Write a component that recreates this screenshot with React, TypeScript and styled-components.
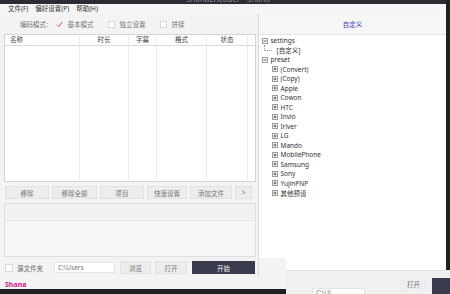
import React from "react";
import styled, { createGlobalStyle } from "styled-components";

const GlobalStyle = createGlobalStyle`
  html, body {
    margin: 0;
    padding: 0;
    background: #1f1f24;
  }
  body {
    font-family: "Noto Sans", "Noto Sans CJK SC", sans-serif;
  }
`;

const columns = [
    { title: "名称", width: 74, left: true },
    { title: "时长", width: 48 },
    { title: "字幕", width: 27 },
    { title: "格式", width: 49 },
    { title: "状态", width: 40 },
    { title: "", width: 12 },
];

const actions = [
    { label: "移除", width: 44 },
    { label: "移除全部", width: 45 },
    { label: "项目", width: 44 },
    { label: "快速设置", width: 40 },
    { label: "添加文件", width: 42 },
    { label: ">", width: 17 },
];

const presets = [
    "(Convert)", "(Copy)", "Apple", "Cowon", "HTC", "Invio", "Iriver", "LG",
    "Mando", "MobilePhone", "Samsung", "Sony", "YujinPNP", "其他预设",
];

function TreeIcon({ open }: { open?: boolean }) {
    return (
        <svg width="6" height="6" viewBox="0 0 6 6">
            <rect x="0.5" y="0.5" width="5" height="5" fill="#fff" stroke="#9c9c9c" />
            <line x1="1.5" y1="3" x2="4.5" y2="3" stroke="#555" />
            {!open && <line x1="3" y1="1.5" x2="3" y2="4.5" stroke="#555" />}
        </svg>
    );
}

function CheckMark() {
    return (
        <svg width="7" height="7" viewBox="0 0 7 7">
            <path d="M1 3.8 L2.8 5.6 L6.2 1" fill="none" stroke="#d2456a" strokeWidth="1" />
        </svg>
    );
}

function App() {
    return (
        <>
            <GlobalStyle />
            <Desktop>
                <Window>
                    <TitleBar>
                        <TitleText>ShanaEncoder - Shana</TitleText>
                    </TitleBar>
                    <MenuBar>
                        <MenuItem>文件(F)</MenuItem>
                        <MenuItem>偏好设置(P)</MenuItem>
                        <MenuItem>帮助(H)</MenuItem>
                    </MenuBar>
                    <Body>
                        <LeftPane>
                            <ModeRow>
                                <ModeLabel>编码模式：</ModeLabel>
                                <Option>
                                    <CheckBox $plain><CheckMark /></CheckBox>
                                    基本模式
                                </Option>
                                <Option>
                                    <CheckBox />
                                    独立设置
                                </Option>
                                <Option>
                                    <CheckBox />
                                    拼接
                                </Option>
                            </ModeRow>
                            <Table>
                                {columns.map((c, i) => (
                                    <Column key={i} $width={c.width} $last={i === columns.length - 1}>
                                        <HeaderCell $left={c.left}>{c.title}</HeaderCell>
                                    </Column>
                                ))}
                            </Table>
                            <ActionRow>
                                {actions.map(a => (
                                    <ActionButton key={a.label} $width={a.width}>{a.label}</ActionButton>
                                ))}
                            </ActionRow>
                            <LogPanel>
                                <LogStrip />
                            </LogPanel>
                            <BottomRow>
                                <CheckBox />
                                <FolderLabel>源文件夹</FolderLabel>
                                <PathInput>C:\Users</PathInput>
                                <ActionButton $width={31}>浏览</ActionButton>
                                <ActionButton $width={32}>打开</ActionButton>
                                <StartButton>开始</StartButton>
                            </BottomRow>
                        </LeftPane>
                        <RightPane>
                            <PaneHeader>
                                <CustomLink>自定义</CustomLink>
                            </PaneHeader>
                            <Tree>
                                <TreeRow $level={0}>
                                    <TreeIcon open />
                                    <span>settings</span>
                                </TreeRow>
                                <TreeRow $level={1}>
                                    <Connector />
                                    <span>[自定义]</span>
                                </TreeRow>
                                <TreeRow $level={0}>
                                    <TreeIcon open />
                                    <span>preset</span>
                                </TreeRow>
                                {presets.map(p => (
                                    <TreeRow key={p} $level={2}>
                                        <TreeIcon />
                                        <span>{p}</span>
                                    </TreeRow>
                                ))}
                            </Tree>
                        </RightPane>
                    </Body>
                    <Footer>Shana</Footer>
                </Window>
                <BackWindow>
                    <BackWhite />
                    <BackBar>
                        <BackInput>C:\Ul</BackInput>
                        <BackButton>打开</BackButton>
                        <BackDark />
                    </BackBar>
                </BackWindow>
            </Desktop>
        </>
    );
}

const Desktop = styled.div`
    position: relative;
    width: 450px;
    height: 294px;
    overflow: hidden;
    background: #1f1f24;
`;

const Window = styled.div`
    width: 446px;
    height: 289px;
    display: flex;
    flex-direction: column;
    background: #f3f3f3;
    color: #555;
    font-size: 6.5px;
`;

const TitleBar = styled.div`
    height: 4px;
    flex: none;
    overflow: hidden;
    background: #2c2c33;
    display: flex;
    justify-content: center;
`;

const TitleText = styled.div`
    margin-top: -6px;
    margin-left: 10px;
    font-size: 8px;
    line-height: 9px;
    color: #8a8a90;
`;

const MenuBar = styled.div`
    height: 10px;
    flex: none;
    display: flex;
    align-items: center;
    gap: 7px;
    padding-left: 8px;
    color: #333;
    background: #f5f5f5;
`;

const MenuItem = styled.span`
    line-height: 10px;
`;

const Body = styled.div`
    flex: 1;
    display: flex;
    min-height: 0;
`;

const LeftPane = styled.div`
    width: 253px;
    padding-left: 4px;
    display: flex;
    flex-direction: column;
`;

const ModeRow = styled.div`
    height: 20px;
    flex: none;
    display: flex;
    align-items: center;
    padding-left: 16px;
    gap: 3px;
    color: #777;
`;

const ModeLabel = styled.span``;

const Option = styled.span`
    display: flex;
    align-items: center;
    gap: 5px;
    margin-right: 11px;
`;

const CheckBox = styled.span<{ $plain?: boolean }>`
    width: 7px;
    height: 7px;
    flex: none;
    display: flex;
    align-items: center;
    justify-content: center;
    box-sizing: border-box;
    border: ${p => (p.$plain ? "none" : "1px solid #d8d8d8")};
    background: ${p => (p.$plain ? "transparent" : "#fff")};
`;

const Table = styled.div`
    height: 148px;
    flex: none;
    width: 252px;
    box-sizing: border-box;
    display: flex;
    background: #fff;
    border: 1px solid #d4d4d4;
`;

const Column = styled.div<{ $width: number; $last?: boolean }>`
    width: ${p => p.$width}px;
    flex: ${p => (p.$last ? 1 : "none")};
    border-right: ${p => (p.$last ? "none" : "1px solid #ececec")};
`;

const HeaderCell = styled.div<{ $left?: boolean }>`
    height: 10px;
    line-height: 10px;
    padding-left: ${p => (p.$left ? "5px" : "0")};
    text-align: ${p => (p.$left ? "left" : "center")};
    color: #444;
    border-bottom: 1px solid #dcdcdc;
`;

const ActionRow = styled.div`
    margin-top: 4px;
    margin-left: 1px;
    height: 13px;
    flex: none;
    display: flex;
    gap: 3px;
`;

const ActionButton = styled.div<{ $width: number }>`
    width: ${p => p.$width}px;
    height: 13px;
    flex: none;
    box-sizing: border-box;
    display: flex;
    align-items: center;
    justify-content: center;
    background: #ececec;
    border: 1px solid #e2e2e2;
    color: #777;
`;

const LogPanel = styled.div`
    margin-top: 4px;
    width: 252px;
    height: 54px;
    flex: none;
    box-sizing: border-box;
    background: #f6f6f6;
    border: 1px solid #e0e0e0;
`;

const LogStrip = styled.div`
    height: 16px;
    border-bottom: 1px solid #e6e6e6;
    background: #f1f1f1;
`;

const BottomRow = styled.div`
    margin-top: 4px;
    margin-left: 1px;
    height: 13px;
    flex: none;
    display: flex;
    align-items: center;
    gap: 4px;

    & > ${CheckBox} {
        width: 8px;
        height: 8px;
    }
`;

const FolderLabel = styled.span`
    margin-right: 7px;
    color: #666;
`;

const PathInput = styled.div`
    width: 61px;
    height: 11px;
    box-sizing: border-box;
    padding-left: 3px;
    line-height: 9px;
    background: #fff;
    border: 1px solid #e6e6e6;
    color: #777;
    margin-right: 1px;
`;

const StartButton = styled.div`
    width: 63px;
    height: 13px;
    margin-left: 1px;
    display: flex;
    align-items: center;
    justify-content: center;
    background: #393a4c;
    color: #f0f0f0;
`;

const RightPane = styled.div`
    flex: 1;
    display: flex;
    flex-direction: column;
    border-left: 1px solid #dadada;
    margin-left: 1px;
`;

const PaneHeader = styled.div`
    height: 20px;
    flex: none;
    display: flex;
    align-items: center;
    justify-content: center;
    background: #f6f6f6;
`;

const CustomLink = styled.span`
    color: #3a44b0;
`;

const Tree = styled.div`
    height: 224px;
    flex: none;
    box-sizing: border-box;
    padding: 1px 0 0 3px;
    background: #fff;
    border-top: 1px solid #e2e2e2;
    color: #333;
`;

const TreeRow = styled.div<{ $level: number }>`
    height: 9.5px;
    display: flex;
    align-items: center;
    gap: 2.5px;
    padding-left: ${p => (p.$level === 2 ? 10 : p.$level === 1 ? 2 : 0)}px;
    white-space: nowrap;
`;

const Connector = styled.span`
    width: 8px;
    height: 6px;
    margin-top: -5px;
    margin-right: 2px;
    box-sizing: border-box;
    border-left: 1px dotted #999;
    border-bottom: 1px dotted #999;
`;

const Footer = styled.div`
    height: 13px;
    flex: none;
    box-sizing: border-box;
    padding: 4px 0 0 5px;
    font-family: "Open Sans", "Noto Sans", sans-serif;
    font-weight: 700;
    font-size: 7px;
    line-height: 9px;
    color: #d3147e;
`;

const BackWindow = styled.div`
    position: absolute;
    left: 286px;
    top: 257px;
    width: 164px;
    height: 37px;
    display: flex;
    flex-direction: column;
    font-size: 6.5px;
    color: #777;
`;

const BackWhite = styled.div`
    height: 13px;
    width: 160px;
    flex: none;
    background: #fff;
`;

const BackBar = styled.div`
    flex: 1;
    min-height: 0;
    overflow: hidden;
    display: flex;
    align-items: flex-start;
    background: #f0f0f0;
    border-top: 1px solid #e4e4e4;
`;

const BackInput = styled.div`
    flex: none;
    margin: 17px 0 0 26px;
    width: 53px;
    height: 10px;
    box-sizing: border-box;
    padding-left: 3px;
    line-height: 8px;
    background: #fff;
    border: 1px solid #e4e4e4;
`;

const BackButton = styled.div`
    flex: none;
    margin: 9px 0 0 35px;
    width: 27px;
    height: 10px;
    line-height: 10px;
    text-align: center;
    background: #ededed;
`;

const BackDark = styled.div`
    margin: 7px 0 0 5px;
    flex: 1;
    height: 24px;
    background: #393a4c;
`;

export default App;
